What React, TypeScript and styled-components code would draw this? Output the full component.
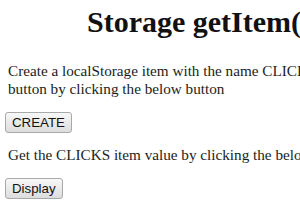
import React from "react";
import styled, { createGlobalStyle } from "styled-components";

const GlobalStyle = createGlobalStyle`
  html, body {
    margin: 0;
    padding: 0;
    background: #ffffff;
    overflow: hidden;
  }
  body {
    font-family: "Liberation Serif", "Times New Roman", serif;
    color: #1c1c1c;
  }
`;

const Page = styled.div`
  width: 382px;
  padding: 5px 8px 0;
`;

const Title = styled.h1`
  margin: 0 0 22px;
  font-size: 30px;
  line-height: 34.5px;
  font-weight: bold;
  text-align: center;
  color: #111;
`;

const Text = styled.p`
  margin: 0 0 14px;
  font-size: 15.2px;
  line-height: 18px;
  white-space: nowrap;
`;

const Button = styled.button`
  display: block;
  height: 21px;
  padding: 0 6px;
  margin: 0 0 13px -3px;
  font-family: "Liberation Sans", Arial, sans-serif;
  font-size: 13.3px;
  color: #111;
  background: linear-gradient(#f8f8f8, #dcdcdc);
  border: 1px solid #a9a9a9;
  border-radius: 3px;
`;

export default function App() {
  return (
    <>
      <GlobalStyle />
      <Page>
        <Title>Storage getItem()</Title>
        <Text>
          Create a localStorage item with the name CLICKS to count the
          <br />
          button by clicking the below button
        </Text>
        <Button>CREATE</Button>
        <Text>Get the CLICKS item value by clicking the below button</Text>
        <Button>Display</Button>
      </Page>
    </>
  );
}
